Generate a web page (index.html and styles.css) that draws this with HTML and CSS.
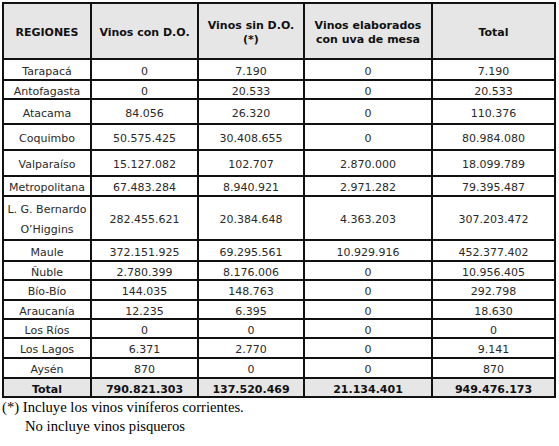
FILE: index.html
```html
<!DOCTYPE html>
<html lang="es">
<head>
<meta charset="utf-8">
<link rel="stylesheet" href="styles.css">
</head>
<body>
<div class="grid">
  <div class="cell head">REGIONES</div>
  <div class="cell head">Vinos con D.O.</div>
  <div class="cell head">Vinos sin D.O.<br>(*)</div>
  <div class="cell head">Vinos elaborados<br>con uva de mesa</div>
  <div class="cell head">Total</div>

  <div class="cell">Tarapacá</div><div class="cell">0</div><div class="cell">7.190</div><div class="cell">0</div><div class="cell">7.190</div>
  <div class="cell">Antofagasta</div><div class="cell">0</div><div class="cell">20.533</div><div class="cell">0</div><div class="cell">20.533</div>
  <div class="cell">Atacama</div><div class="cell">84.056</div><div class="cell">26.320</div><div class="cell">0</div><div class="cell">110.376</div>
  <div class="cell">Coquimbo</div><div class="cell">50.575.425</div><div class="cell">30.408.655</div><div class="cell">0</div><div class="cell">80.984.080</div>
  <div class="cell">Valparaíso</div><div class="cell">15.127.082</div><div class="cell">102.707</div><div class="cell">2.870.000</div><div class="cell">18.099.789</div>
  <div class="cell">Metropolitana</div><div class="cell">67.483.284</div><div class="cell">8.940.921</div><div class="cell">2.971.282</div><div class="cell">79.395.487</div>
  <div class="cell two">L. G. Bernardo<br>O’Higgins</div><div class="cell">282.455.621</div><div class="cell">20.384.648</div><div class="cell">4.363.203</div><div class="cell">307.203.472</div>
  <div class="cell">Maule</div><div class="cell">372.151.925</div><div class="cell">69.295.561</div><div class="cell">10.929.916</div><div class="cell">452.377.402</div>
  <div class="cell">Ñuble</div><div class="cell">2.780.399</div><div class="cell">8.176.006</div><div class="cell">0</div><div class="cell">10.956.405</div>
  <div class="cell">Bío-Bío</div><div class="cell">144.035</div><div class="cell">148.763</div><div class="cell">0</div><div class="cell">292.798</div>
  <div class="cell">Araucanía</div><div class="cell">12.235</div><div class="cell">6.395</div><div class="cell">0</div><div class="cell">18.630</div>
  <div class="cell">Los Ríos</div><div class="cell">0</div><div class="cell">0</div><div class="cell">0</div><div class="cell">0</div>
  <div class="cell">Los Lagos</div><div class="cell">6.371</div><div class="cell">2.770</div><div class="cell">0</div><div class="cell">9.141</div>
  <div class="cell">Aysén</div><div class="cell">870</div><div class="cell">0</div><div class="cell">0</div><div class="cell">870</div>

  <div class="cell tot">Total</div><div class="cell tot">790.821.303</div><div class="cell tot">137.520.469</div><div class="cell tot">21.134.401</div><div class="cell tot">949.476.173</div>
</div>
<div class="notes">
  <p class="note">(*) Incluye los vinos viníferos corrientes.</p>
  <p class="note indent">No incluye vinos pisqueros</p>
</div>
</body>
</html>
```
FILE: styles.css
```css
html, body {
  margin: 0;
  padding: 0;
  background: #fff;
}

body {
  padding: 2px 0 0 2px;
}

.grid {
  display: grid;
  width: max-content;
  grid-template-columns: 88px 107px 106px 128px 123px;
  grid-template-rows: 56px 21px 19px 25px 26px 26px 20px 44px 21px 19px 20px 19px 19px 20px 20px 19px;
  border-left: 2px solid #111;
  border-top: 2px solid #111;
  font-family: "DejaVu Sans", Verdana, sans-serif;
  font-size: 11px;
  color: #2a2a2a;
}

.cell {
  box-sizing: border-box;
  border-right: 2px solid #111;
  border-bottom: 2px solid #111;
  padding-top: 3px;
  display: flex;
  align-items: center;
  justify-content: center;
  text-align: center;
  line-height: 13px;
  white-space: nowrap;
}

.head {
  background: #e6e6e6;
  font-weight: bold;
  color: #111;
  line-height: 14px;
}

.two {
  line-height: 20px;
}

.tot {
  background: #e6e6e6;
  font-weight: bold;
  color: #111;
}

.notes {
  font-family: "Liberation Serif", "Times New Roman", serif;
  font-size: 14.67px;
  color: #000;
}

.note {
  margin: 0;
  line-height: 19px;
}

.indent {
  padding-left: 23px;
}
```
